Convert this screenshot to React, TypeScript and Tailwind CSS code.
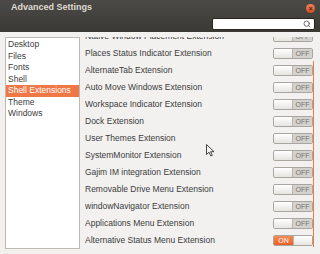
import { Search } from 'lucide-react'

const sections = ['Desktop', 'Files', 'Fonts', 'Shell', 'Shell Extensions', 'Theme', 'Windows']

const extensions = [
  { name: 'Native Window Placement Extension', on: false },
  { name: 'Places Status Indicator Extension', on: false },
  { name: 'AlternateTab Extension', on: false },
  { name: 'Auto Move Windows Extension', on: false },
  { name: 'Workspace Indicator Extension', on: false },
  { name: 'Dock Extension', on: false },
  { name: 'User Themes Extension', on: false },
  { name: 'SystemMonitor Extension', on: false },
  { name: 'Gajim IM integration Extension', on: false },
  { name: 'Removable Drive Menu Extension', on: false },
  { name: 'windowNavigator Extension', on: false },
  { name: 'Applications Menu Extension', on: false },
  { name: 'Alternative Status Menu Extension', on: true },
]

function Toggle({ on }: { on: boolean }) {
  return (
    <div className="flex h-[11px] w-[40px] overflow-hidden rounded-[2px] border border-[#a9a6a0] text-[7px] leading-none">
      {on ? (
        <>
          <div className="flex w-1/2 items-center justify-center bg-gradient-to-b from-[#f58a55] to-[#e85f22] text-white">ON</div>
          <div className="w-1/2 border-l border-[#b9b6b0] bg-gradient-to-b from-[#ffffff] to-[#e6e4e0]" />
        </>
      ) : (
        <>
          <div className="w-1/2 border-r border-[#b9b6b0] bg-gradient-to-b from-[#ffffff] to-[#e6e4e0]" />
          <div className="flex w-1/2 items-center justify-center bg-[#d4d2ce] text-[#77746f]">OFF</div>
        </>
      )}
    </div>
  )
}

export default function App() {
  return (
    <div
      className="relative flex h-[254px] w-[320px] flex-col overflow-hidden bg-[#f2f1f0]"
      style={{ fontFamily: '"Liberation Sans", Arial, sans-serif' }}
    >
      {/* タイトルバー */}
      <div className="flex h-[33px] flex-col bg-gradient-to-b from-[#4b4a46] to-[#3a3935]">
        <div className="flex h-[16px] items-center justify-between pl-[11px] pr-[5px]">
          <span className="text-[9px] font-bold text-[#dfdbd2]">Advanced Settings</span>
          <div className="flex h-[9px] w-[9px] items-center justify-center rounded-full bg-gradient-to-b from-[#f7835a] to-[#d64a1c] text-[7px] font-bold leading-none text-[#3a2a22]">
            ×
          </div>
        </div>
        <div className="flex flex-1 items-start justify-end pr-[5px] pt-[2px]">
          <div className="flex h-[12px] w-[103px] items-center justify-end rounded-[2px] border border-[#27261f] bg-white pr-[3px]">
            <Search className="h-[8px] w-[8px] text-[#555]" strokeWidth={2.5} />
          </div>
        </div>
      </div>

      {/* 本体 */}
      <div className="flex flex-1 gap-[5px] p-[5px]">
        <div className="w-[75px] border border-[#bdbab4] bg-white pt-[1px]">
          {sections.map((s) => (
            <div
              key={s}
              className={`flex h-[11.5px] items-center pl-[2px] text-[8.5px] ${
                s === 'Shell Extensions' ? 'bg-[#f07746] text-white' : 'text-[#3c3c3c]'
              }`}
            >
              {s}
            </div>
          ))}
        </div>

        <div className="relative flex-1 overflow-hidden">
          <div className="mt-[-9px]">
            {extensions.map((e) => (
              <div key={e.name} className="flex h-[17px] items-center justify-between pr-[2px] text-[8.5px] text-[#3c3c3c]">
                <span>{e.name}</span>
                <Toggle on={e.on} />
              </div>
            ))}
          </div>
          <div className="absolute right-[1px] top-[24px] h-[186px] w-[1.5px] bg-[#f07746]" />
        </div>
      </div>

      {/* マウスカーソル */}
      <svg className="absolute left-[206px] top-[144px]" width="9" height="13" viewBox="0 0 9 13">
        <path d="M0.5 0.5 L0.5 10.5 L3 8.2 L4.8 12 L6.3 11.3 L4.6 7.7 L8 7.7 Z" fill="#f4f4f4" stroke="#333" strokeWidth="0.9" />
      </svg>
    </div>
  )
}
